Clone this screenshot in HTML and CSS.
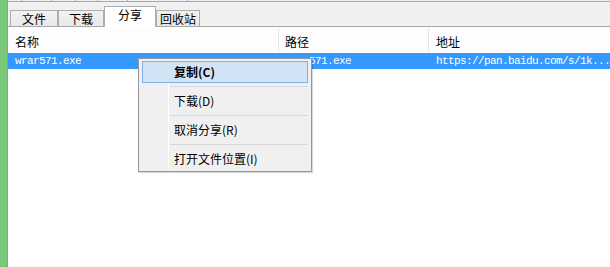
FILE: index.html
```html
<!DOCTYPE html>
<html>
<head>
<meta charset="utf-8">
<link rel="stylesheet" href="styles.css">
</head>
<body>
<div class="app">
  <div class="stripe"></div>
  <div class="main">
    <div class="topstub">
      <span class="cell c1"></span><span class="cell c2"></span><span class="cell c3"></span><span class="cell c4"></span><span class="cell c5"></span><span class="cell c6"></span>
    </div>
    <div class="tabs">
      <div class="tab t1">文件</div>
      <div class="tab t2">下载</div>
      <div class="tab active t3">分享</div>
      <div class="tab t4">回收站</div>
    </div>
    <div class="list">
      <div class="header">
        <div class="col name">名称</div>
        <div class="col path">路径</div>
        <div class="col addr">地址</div>
      </div>
      <div class="row selected">
        <div class="col name mono">wrar571.exe</div>
        <div class="col path mono">wrar571.exe</div>
        <div class="col addr mono">https://pan.baidu.com/s/1k...</div>
      </div>
    </div>
  </div>
  <div class="menu">
    <div class="gutter"></div>
    <div class="item hot"><span class="label bold">复制(C)</span></div>
    <div class="sep"></div>
    <div class="item"><span class="label">下载(D)</span></div>
    <div class="sep"></div>
    <div class="item"><span class="label">取消分享(R)</span></div>
    <div class="sep"></div>
    <div class="item"><span class="label">打开文件位置(I)</span></div>
  </div>
</div>
</body>
</html>
```

FILE: styles.css
```css
* { box-sizing: border-box; }
html, body { margin: 0; padding: 0; background: #ffffff; }
body {
  width: 610px;
  height: 267px;
  overflow: hidden;
  font-family: "Noto Sans CJK SC", "Noto Sans", sans-serif;
  font-size: 12px;
  color: #000;
}
.app {
  position: relative;
  display: flex;
  width: 610px;
  height: 267px;
}
.stripe {
  width: 8px;
  flex: none;
  background: #78c878;
  border-right: 1px solid #9a9a9a;
}
.main {
  flex: 1;
  display: flex;
  flex-direction: column;
  background: #ffffff;
}
.topstub {
  height: 2px;
  display: flex;
  background: #f0f0f0;
  border-bottom: 1px solid #a8a8a8;
  padding-left: 2px;
}
.cell { height: 1px; border-right: 1px solid #a8a8a8; }
.c1 { width: 12px; }
.c2 { width: 30px; }
.c3 { width: 24px; }
.c4 { width: 22px; }
.c5 { width: 30px; }
.c6 { width: 60px; }
.tabs {
  height: 25px;
  display: flex;
  align-items: flex-end;
  background: #f0f0f0;
  border-bottom: 1px solid #a8a8a8;
  padding-left: 2px;
}
.tab {
  height: 16px;
  border: 1px solid #adadad;
  border-bottom: none;
  background: linear-gradient(#f2f2f2, #e8e8e8);
  display: flex;
  align-items: center;
  justify-content: center;
  line-height: 14px;
  font-size: 12px;
  margin-right: 0;
}
.t1 { width: 48px; }
.t2 { width: 46px; }
.t3 { width: 52px; }
.t4 { width: 44px; }
.tab.active {
  height: 21px;
  margin-bottom: -1px;
  background: #ffffff;
  align-items: flex-start;
  padding-top: 1px;
  position: relative;
  z-index: 1;
}
.list { flex: 1; background: #fff; }
.header {
  display: flex;
  height: 25px;
  padding-top: 1px;
  background: #fdfdfd;
}
.header .col {
  line-height: 24px;
  padding-top: 2px;
  border-right: 1px solid #e6e6e6;
}
.col { white-space: nowrap; overflow: hidden; }
.name { width: 271px; padding-left: 7px; }
.path { width: 150px; padding-left: 6px; }
.addr { flex: 1; padding-left: 7px; border-right: none !important; }
.row {
  display: flex;
  height: 16px;
  margin-top: 1px;
  line-height: 16px;
}
.selected { background: #3399ff; color: #ffffff; }
.mono {
  font-family: "Liberation Mono", "DejaVu Sans Mono", monospace;
  font-size: 11px;
  letter-spacing: -0.6px;
}
.menu {
  position: absolute;
  left: 138px;
  top: 58px;
  width: 174px;
  height: 114px;
  background: #f0f0f0;
  border: 1px solid #979797;
  padding: 2px 3px 2px 3px;
  box-shadow: 1px 1px 1px rgba(0,0,0,0.15);
}
.gutter {
  position: absolute;
  left: 29px;
  top: 2px;
  bottom: 2px;
  width: 1px;
  background: #e2e2e2;
  border-right: 1px solid #ffffff;
}
.item {
  position: relative;
  height: 22px;
  display: flex;
  align-items: center;
  padding-left: 31px;
  border: 1px solid transparent;
}
.item.hot {
  background: #d1e3f4;
  border-color: #7db2e7;
}
.label { font-size: 12px; line-height: 14px; }
.bold { font-weight: bold; }
.sep {
  height: 7px;
  margin-left: 28px;
  position: relative;
}
.sep::after {
  content: "";
  position: absolute;
  left: 0;
  right: 0;
  top: 3px;
  height: 1px;
  background: #d7d7d7;
}
```
